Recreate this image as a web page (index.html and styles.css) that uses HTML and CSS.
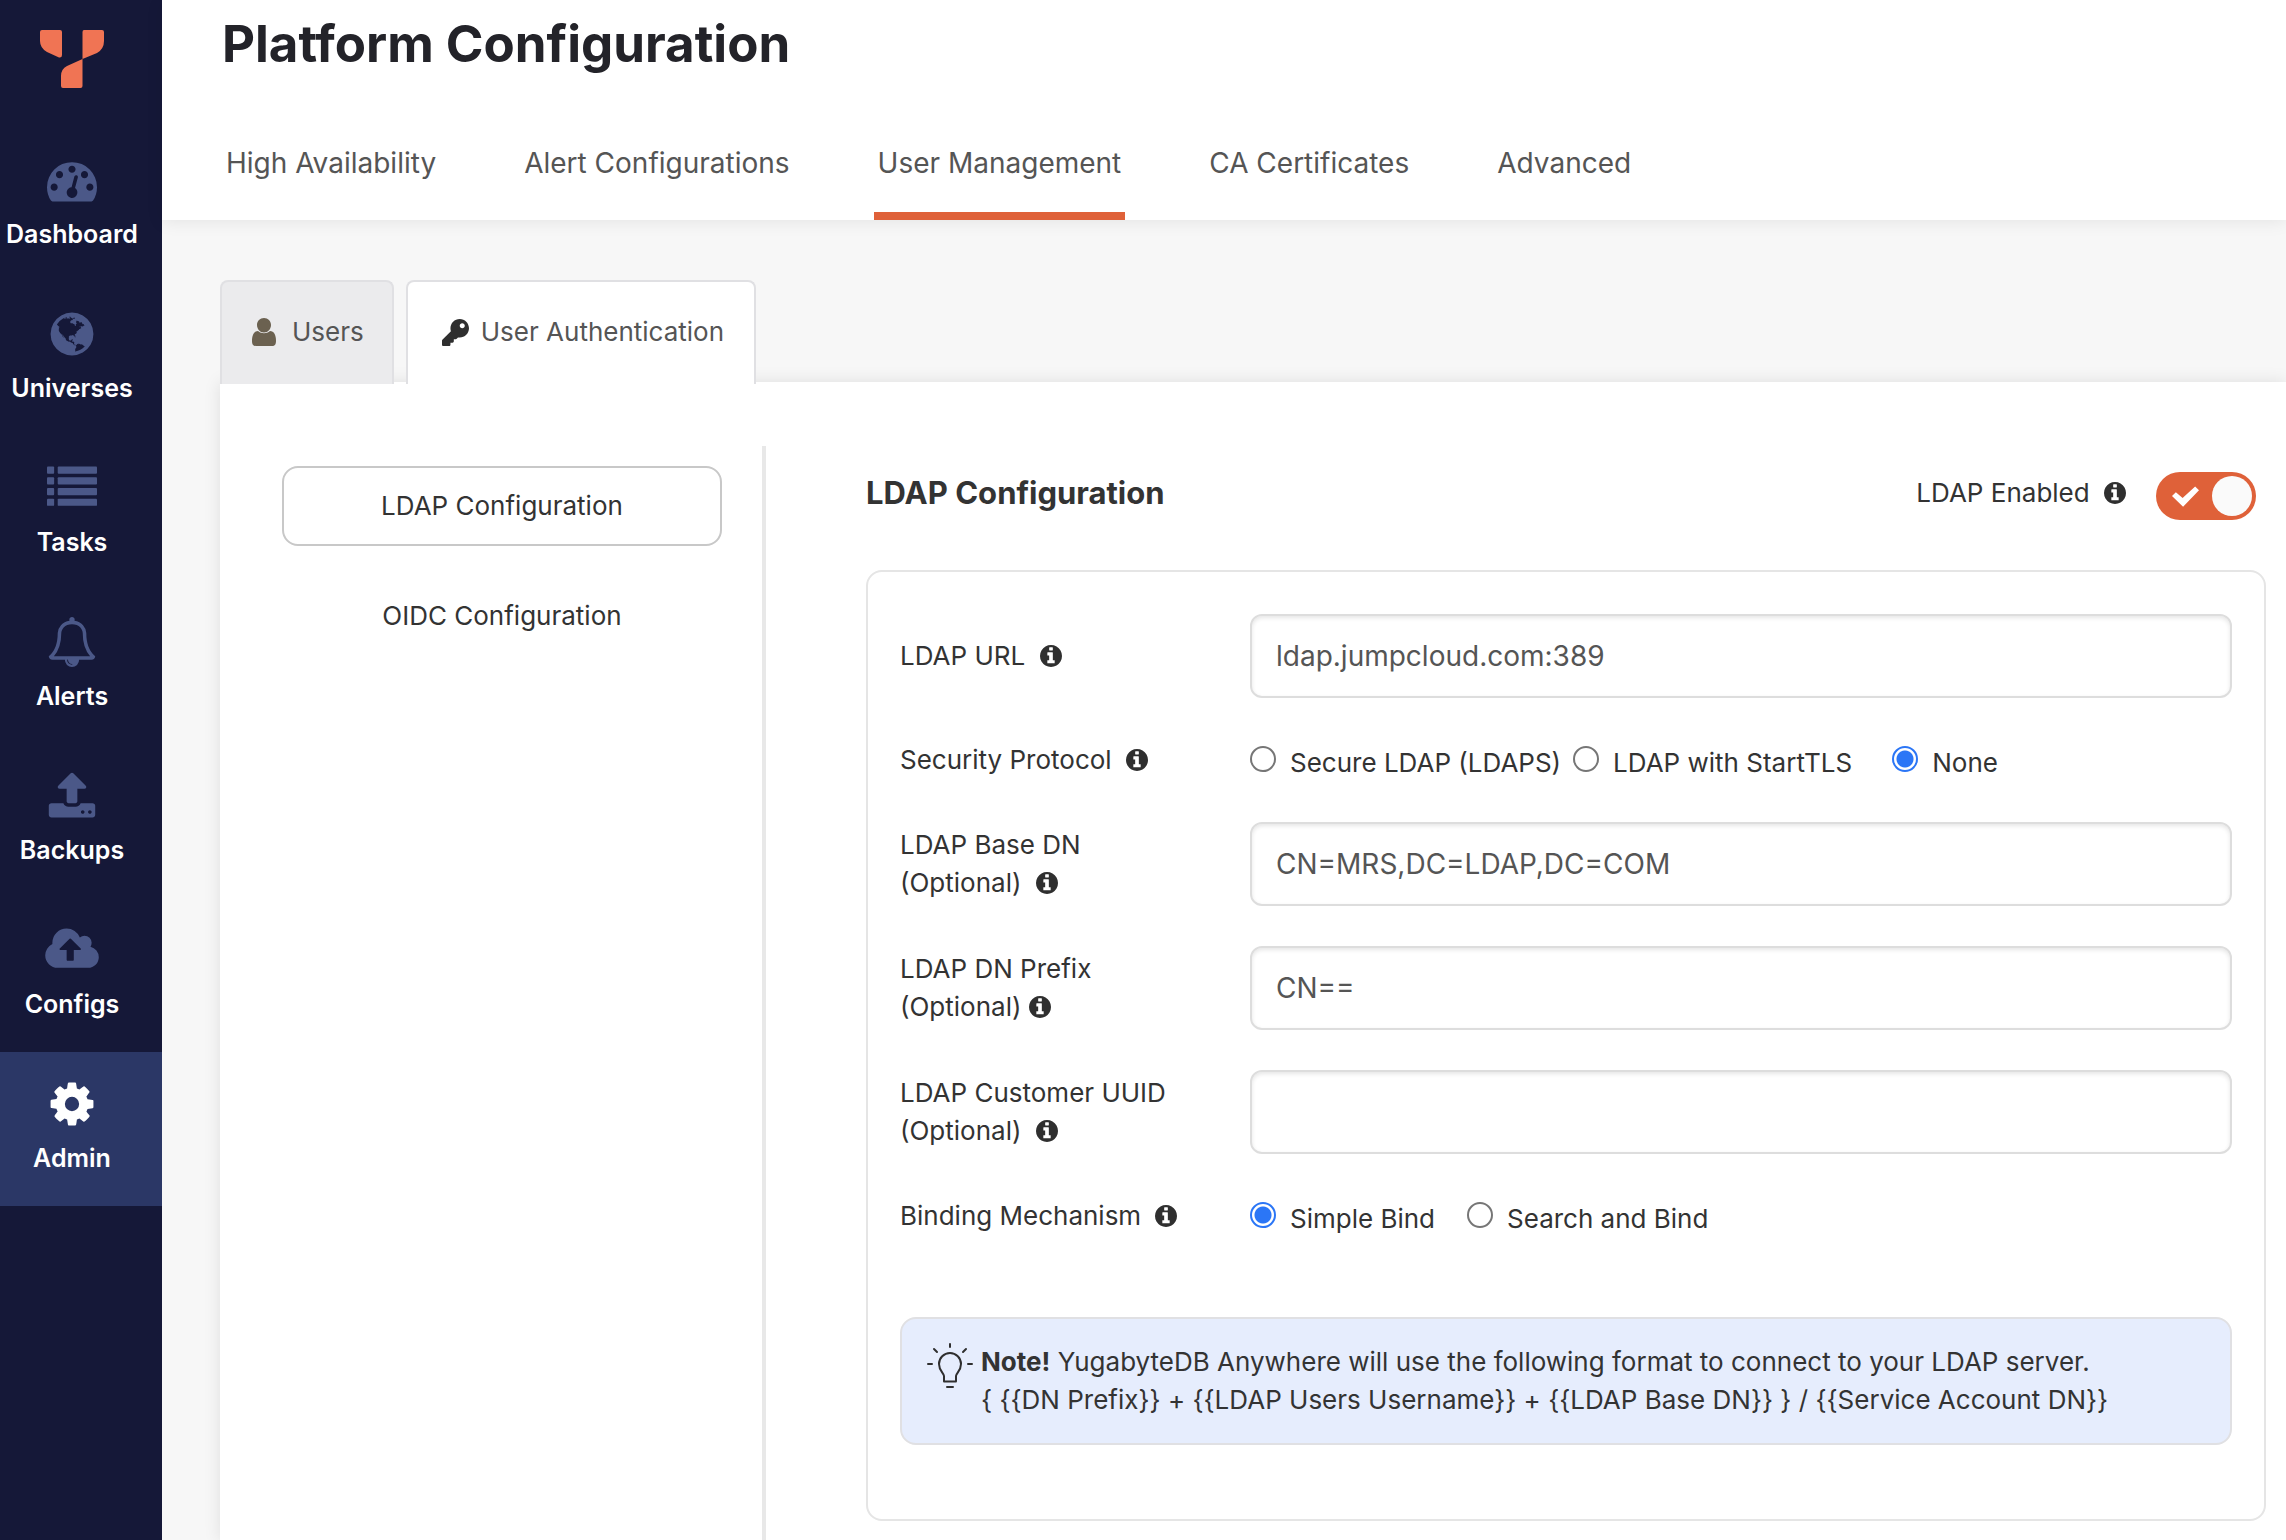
FILE: index.html
```html
<!DOCTYPE html>
<html lang="en">
<head>
<meta charset="utf-8">
<title>Platform Configuration</title>
<link rel="stylesheet" href="styles.css">
</head>
<body>
<svg class="sprite" aria-hidden="true">
  <symbol id="info" viewBox="128 128 1536 1536"><path d="M1152 1376v-160q0-14-9-23t-23-9h-96v-512q0-14-9-23t-23-9h-320q-14 0-23 9t-9 23v160q0 14 9 23t23 9h96v320h-96q-14 0-23 9t-9 23v160q0 14 9 23t23 9h448q14 0 23-9t9-23zm-128-896v-160q0-14-9-23t-23-9h-192q-14 0-23 9t-9 23v160q0 14 9 23t23 9h192q14 0 23-9t9-23zm640 416q0 209-103 385.5t-279.5 279.5-385.5 103-385.5-103-279.5-279.5-103-385.5 103-385.5 279.5-279.5 385.5-103 385.5 103 279.5 279.5 103 385.5z"/></symbol>
</svg>
<div class="app">
  <nav class="sidebar" aria-label="Main">
    <a class="logo" href="#" aria-label="YugabyteDB">
      <svg width="64" height="58" viewBox="0 0 64 58"><path d="M2 0h18q2 0 2 2v23q0 3-3 2.500L7 22Q0 18 0 11V2Q0 0 2 0zM44 0h18q2 0 2 2v9q0 8-7 12L42.500 29V56q0 2-2 2H23q-2 0-2-2V46q0-7 6-10l15.500-7V2q0-2 1.500-2z"/></svg>
    </a>
    <a class="side-item" href="#">
      <svg class="side-icon" viewBox="0 0 1792 1792"><path d="M384 1152q0-53-37.5-90.5t-90.5-37.5-90.5 37.5-37.5 90.5 37.5 90.5 90.5 37.5 90.5-37.5 37.5-90.5zm192-448q0-53-37.5-90.5t-90.5-37.5-90.5 37.5-37.5 90.5 37.5 90.5 90.5 37.5 90.5-37.5 37.5-90.5zm428 481l101-382q6-26-7.500-48.500t-38.500-29.500-48 6.500-30 39.500l-101 382q-60 5-107 43.500t-63 98.500q-20 77 20 146t117 89 146-20 89-117q16-60-6-117t-72-91zm660-33q0-53-37.500-90.500t-90.500-37.500-90.500 37.500-37.500 90.500 37.500 90.500 90.500 37.500 90.500-37.500 37.500-90.500zm-640-640q0-53-37.500-90.500t-90.500-37.500-90.500 37.500-37.500 90.500 37.500 90.500 90.500 37.500 90.500-37.500 37.500-90.500zm448 192q0-53-37.500-90.500t-90.500-37.500-90.500 37.500-37.500 90.500 37.500 90.500 90.500 37.500 90.500-37.500 37.500-90.500zm320 448q0 261-141 483-19 29-54 29h-1402q-35 0-54-29-141-221-141-483 0-182 71-348t191-286 286-191 348-71 348 71 286 191 191 286 71 348z"/></svg>
      Dashboard
    </a>
    <a class="side-item" href="#">
      <svg class="side-icon" viewBox="0 0 1792 1792"><path d="M896 128q209 0 385.5 103t279.5 279.5 103 385.5-103 385.5-279.5 279.5-385.5 103-385.5-103-279.5-279.5-103-385.5 103-385.5 279.5-279.5 385.5-103zm274 521q-2 1-9.5 9.5t-13.5 9.5q2 0 4.5-5t5-11 3.5-7q6-7 22-15 14-6 52-12 34-8 51 11-2-2 9.500-13t14.500-12q3-2 15-4.500t15-7.500l2-22q-12 1-17.500-7t-6.500-21q0 2-6 8 0-7-4.500-8t-11.500 1-9 1q-10-3-15-7.500t-8-16.500-4-15q-2-5-9.500-11t-9.500-10q-1-2-2.500-5.500t-3-6.500-4-5.500-5.500-2.500-7 5-7.500 10-4.500 5q-3-2-6-1.500t-4.500 1-4.500 3-5 3.500q-3 2-8.500 3t-8.500 2q15-5-1-11-10-4-16-3 9-4 7.500-12t-8.500-14h5q-1-4-8.500-8.500t-17.500-8.500-13-6q-8-5-34-9.500t-33-.5q-5 6-4.500 10.500t4 14 3.500 12.500q1 6-5.500 13t-6.500 12q0 7 14 15.500t10 21.500q-3 8-16 16t-16 12q-5 8-1.500 18.500t10.500 16.500q2 2 1.500 4t-3.500 4.500-5.500 4-6.500 3.500l-3 2q-11 5-20.500-6t-13.500-26q-7-25-16-30-23-8-29 1-5-13-41-26-25-9-58-4 6-1 0-15-7-15-19-12 3-6 4-17.500t1-13.500q3-13 12-23 1-1 7-8.500t9.500-13.500.5-6q35 4 50-11 5-5 11.500-17t10.500-17q9-6 14-5.500t14.500 5.500 14.500 5q14 1 15.500-11t-7.500-20q12 1 3-17-4-7-8-9-12-4-27 5-8 4 2 8-1-1-9.500 10.500t-16.500 17.500-16-5q-1-1-5.500-13.500t-9.500-13.500q-8 0-16 15 3-8-11-15t-24-8q19-12-8-27-7-4-20.500-5t-19.500 4q-5 7-5.500 11.500t5 8 10.500 5.500 11.500 4 8.500 3q14 10 8 14-2 1-8.500 3.500t-11.500 4.500-6 4q-3 4 0 14t-2 14q-5-5-9-17.500t-7-16.500q7 9-25 6l-10-1q-4 0-16 2t-20.500 1-13.500-8q-4-8 0-20 1-4 4-2-4-3-11-9.500t-10-8.500q-46 15-94 41 6 1 12-1 5-2 13-6.500t10-5.500q34-14 42-7l5-5q14 16 20 25-7-4-30-1-20 6-22 12 7 12 5 18-4-3-11.500-10t-14.500-11-15-5q-16 0-22 1-146 80-235 222 7 7 12 8 4 1 5 9t2.500 11 11.500-3q9 8 3 19 1-1 44 27 19 17 21 21 3 11-10 18-1-2-9-9t-9-4q-3 5 .5 18.500t10.500 12.500q-7 0-9.500 16t-2.500 35.500-1 23.500l2 1q-3 12 5.500 34.500t21.500 19.500q-13 3 20 43 6 8 8 9 3 2 12 7.500t15 10 10 10.500q4 5 10 22.500t14 23.500q-2 6 9.500 20t10.500 23q-1 0-2.500 1t-2.500 1q3 7 15.500 14t15.500 13q1 3 2 10t3 11 8 2q2-20-24-62-15-25-17-29-3-5-5.500-15.500t-4.500-14.500q2 0 6 1.500t8.500 3.500 7.500 4 2 3q-3 7 2 17.500t12 18.500 17 19 12 13q6 6 14 19.500t0 13.500q9 0 20 10.500t17 19.500q5 8 8 26t5 24q2 7 8.500 13.500t12.500 9.500l16 8 13 7q5 2 18.500 10.500t21.500 11.500q10 4 16 4t14.500-2.500 13.500-3.500q15-2 29 15t21 21q36 19 55 11-2 1 .5 7.500t8 15.500 9 14.500 5.500 8.500q5 6 18 15t18 15q6-4 7-9-3 8 7 20t18 10q14-3 14-32-31 15-49-18 0-1-2.500-5.500t-4-8.500-2.500-8.500 0-7.500 5-3q9 0 10-3.500t-2-12.500-4-13q-1-8-11-20t-12-15q-5 9-16 8t-16-9q0 1-1.500 5.500t-1.500 6.500q-13 0-15-1 1-3 2.500-17.500t3.500-22.500q1-4 5.500-12t7.500-14.500 4-12.500-4.500-9.500-17.500-2.500q-19 1-26 20-1 3-3 10.500t-5 11.500-9 7q-7 3-24 2t-24-5q-13-8-22.500-29t-9.500-37q0-10 2.500-26.500t3-25-5.500-24.500q3-2 9-9.500t10-10.500q2-1 4.500-1.500t4.500 0 4-1.500 3-6q-1-1-4-3-3-3-4-3 7 3 28.500-1.500t27.500 1.500q15 11 22-2 0-1-2.500-9.500t-.5-13.500q5 27 29 9 3 3 15.500 5t17.500 5q3 2 7 5.500t5.500 4.500 5-.5 8.500-6.500q10 14 12 24 11 40 19 44 7 3 11 2t4.500-9.500 0-14-1.500-12.500l-1-8v-18l-1-8q-15-3-18.500-12t1.500-18.500 15-18.500q1-1 8-3.500t15.500-6.500 12.500-8q21-19 15-35 7 0 11-9-1 0-5-3t-7.500-5-4.500-2q9-5 2-16 5-3 7.500-11t7.500-10q9 12 21 2 8-8 1-16 5-7 20.500-10.500t18.500-9.500q7 2 8-2t1-12 3-12q4-5 15-9t13-5l17-11q3-4 0-4 18 2 31-11 10-11-6-20 3-6-3-9.500t-15-5.500q3-1 11.500-.5t10.500-1.500q15-10-7-16-17-5-43 12zm-163 877q206-36 351-189-3-3-12.500-4.500t-12.500-3.500q-18-7-24-8 1-7-2.500-13t-8-9-12.500-8-11-7q-2-2-7-6t-7-5.500-7.500-4.500-8.500-2-10 1l-3 1q-3 1-5.500 2.500t-5.500 3-4 3 0 2.500q-21-17-36-22-5-1-11-5.500t-10.500-7-10-1.500-11.500 7q-5 5-6 15t-2 13q-7-5 0-17.500t2-18.500q-3-6-10.500-4.500t-12 4.500-11.500 8.500-9 6.500-8.500 5.500-8.500 7.500q-3 4-6 12t-5 11q-2-4-11.500-6.500t-9.500-5.500q2 10 4 35t5 38q7 31-12 48-27 25-29 40-4 22 12 26 0 7-8 20.500t-7 21.500q0 6 2 16z"/></svg>
      Universes
    </a>
    <a class="side-item" href="#">
      <svg class="side-icon" viewBox="0 0 1792 1792"><g><rect x="0" y="128" width="256" height="256" rx="32"/><rect x="384" y="128" width="1408" height="256" rx="32"/><rect x="0" y="512" width="256" height="256" rx="32"/><rect x="384" y="512" width="1408" height="256" rx="32"/><rect x="0" y="896" width="256" height="256" rx="32"/><rect x="384" y="896" width="1408" height="256" rx="32"/><rect x="0" y="1280" width="256" height="256" rx="32"/><rect x="384" y="1280" width="1408" height="256" rx="32"/></g></svg>
      Tasks
    </a>
    <a class="side-item" href="#">
      <svg class="side-icon" viewBox="0 0 1792 1792"><path d="M912 1696q0-16-16-16-59 0-101.5-42.5t-42.5-101.5q0-16-16-16t-16 16q0 73 51.5 124.5t124.5 51.5q16 0 16-16zm-666-288h1300q-266-300-266-832 0-51-24-105t-69-103-121.5-80.5-169.5-31.5-169.5 31.5-121.5 80.5-69 103-24 105q0 532-266 832zm1482 0q0 52-38 90t-90 38h-448q0 106-75 181t-181 75-181-75-75-181h-448q-52 0-90-38t-38-90q50-42 91-88t85-119.5 74.5-158.5 50-206 19.5-260q0-152 117-282.5t307-158.5q-8-19-8-39 0-40 28-68t68-28 68 28 28 68q0 20-8 39 190 28 307 158.5t117 282.5q0 139 19.5 260t50 206 74.5 158.5 85 119.5 91 88z"/></svg>
      Alerts
    </a>
    <a class="side-item" href="#">
      <svg class="side-icon" viewBox="0 0 1792 1792"><path d="M1344 1472q0-26-19-45t-45-19-45 19-19 45 19 45 45 19 45-19 19-45zm256 0q0-26-19-45t-45-19-45 19-19 45 19 45 45 19 45-19 19-45zm128-224v320q0 40-28 68t-68 28h-1472q-40 0-68-28t-28-68v-320q0-40 28-68t68-28h427q21 56 70.5 92t110.5 36h256q61 0 110.5-36t70.5-92h427q40 0 68 28t28 68zm-325-648q-17 40-59 40h-256v448q0 26-19 45t-45 19h-256q-26 0-45-19t-19-45v-448h-256q-42 0-59-40-17-39 14-69l448-448q18-19 45-19t45 19l448 448q31 30 14 69z"/></svg>
      Backups
    </a>
    <a class="side-item" href="#">
      <svg class="side-icon side-icon-wide" viewBox="-64 0 1920 1792"><path d="M1216 864q0-14-9-23l-352-352q-9-9-23-9t-23 9l-351 351q-10 12-10 24 0 14 9 23t23 9h224v352q0 13 9.5 22.5t22.5 9.5h192q13 0 22.5-9.5t9.5-22.5v-352h224q13 0 22.5-9.5t9.5-22.5zm640 288q0 159-112.500 271.500t-271.500 112.500h-1088q-185 0-316.500-131.500t-131.500-316.500q0-130 70-240t188-165q-2-30-2-43 0-212 150-362t362-150q156 0 285.500 87t188.500 231q71-62 166-62 106 0 181 75t75 181q0 76-41 138 130 31 213.500 135.500t83.500 238.500z"/></svg>
      Configs
    </a>
    <a class="side-item side-item-active" href="#" aria-current="page">
      <svg class="side-icon" viewBox="0 0 1792 1792"><path d="M1152 896q0-106-75-181t-181-75-181 75-75 181 75 181 181 75 181-75 75-181zm512-109v222q0 12-8 23t-20 13l-185 28q-19 54-39 91 35 50 107 138 10 12 10 25t-9 23q-27 37-99 108t-94 71q-12 0-26-9l-138-108q-44 23-91 38-16 136-29 186-7 28-36 28h-222q-14 0-24.5-8.5t-11.5-21.5l-28-184q-49-16-90-37l-141 107q-10 9-25 9-14 0-25-11-126-114-165-168-7-10-7-23 0-12 8-23 15-21 51-66.5t54-70.5q-27-50-41-99l-183-27q-13-2-21-12.5t-8-23.5v-222q0-12 8-23t19-13l186-28q14-46 39-92-40-57-107-138-10-12-10-24 0-10 9-23 26-36 98.5-107.5t94.5-71.5q13 0 26 10l138 107q44-23 91-38 16-136 29-186 7-28 36-28h222q14 0 24.5 8.5t11.5 21.5l28 184q49 16 90 37l142-107q9-9 24-9 13 0 25 10 129 119 165 170 7 8 7 22 0 12-8 23-15 21-51 66.5t-54 70.5q26 50 41 98l183 28q13 2 21 12.5t8 23.5z"/></svg>
      Admin
    </a>
  </nav>

  <div class="page">
    <header class="header">
      <h1 class="title">Platform Configuration</h1>
      <nav class="tabs" aria-label="Configuration">
        <a class="tab" href="#">High Availability</a>
        <a class="tab" href="#">Alert Configurations</a>
        <a class="tab tab-active" href="#" aria-current="page">User Management</a>
        <a class="tab" href="#">CA Certificates</a>
        <a class="tab" href="#">Advanced</a>
      </nav>
    </header>

    <main class="content">
      <div class="subtabs">
        <button class="subtab subtab-users" type="button">
          <svg class="user-icon" width="24" height="28" viewBox="0 0 24 28"><path d="M12 0c4 0 7 3 7 7s-3 7.500-7 7.500S5 11 5 7s3-7 7-7zM6 13c3.500 3 8.500 3 12 0 4 0 6 4 6 10 0 3-1 5-4 5H4c-3 0-4-2-4-5 0-6 2-10 6-10z"/></svg>
          Users
        </button>
        <button class="subtab subtab-active" type="button">
          <svg width="27" height="27" viewBox="0 0 512 512"><path d="M512 176.001C512 273.203 433.202 352 336 352c-11.220 0-22.190-1.062-32.827-3.069l-24.012 27.014A23.999 23.999 0 0 1 261.223 384H224v40c0 13.255-10.745 24-24 24h-40v40c0 13.255-10.745 24-24 24H24c-13.255 0-24-10.745-24-24v-78.059c0-6.365 2.529-12.470 7.029-16.971l161.802-161.802C163.108 213.814 160 195.271 160 176 160 78.798 238.797.001 335.999 0 433.488-.001 512 78.511 512 176.001zM336 128c0 26.510 21.490 48 48 48s48-21.490 48-48-21.490-48-48-48-48 21.490-48 48z"/></svg>
          User Authentication
        </button>
      </div>

      <div class="panel">
        <div class="providers">
          <button class="provider provider-active" type="button">LDAP Configuration</button>
          <button class="provider" type="button">OIDC Configuration</button>
        </div>

        <section class="config">
          <div class="config-head">
            <h2 class="config-title">LDAP Configuration</h2>
            <label class="enable">
              <span class="enable-text">LDAP Enabled <svg class="info gap-l"><use href="#info"/></svg></span>
              <input class="switch-input" type="checkbox" checked>
              <span class="switch">
                <svg width="27" height="21" viewBox="0 0 28 21"><path d="M0 10l4-4 7 6L24 0l4 4-16.500 17z"/></svg>
                <span class="thumb"></span>
              </span>
            </label>
          </div>

          <form class="form">
            <div class="row">
              <label class="label" for="url">LDAP URL <svg class="info gap-l"><use href="#info"/></svg></label>
              <input class="field" id="url" type="text" value="ldap.jumpcloud.com:389">
            </div>
            <div class="row row-radio" role="radiogroup" aria-labelledby="protocol">
              <span class="label" id="protocol">Security Protocol <svg class="info gap-l"><use href="#info"/></svg></span>
              <div class="radios">
                <label class="option"><input class="radio" type="radio" name="protocol"><span class="option-text">Secure LDAP (LDAPS)</span></label>
                <label class="option option-wider"><input class="radio" type="radio" name="protocol"><span class="option-text">LDAP with StartTLS</span></label>
                <label class="option"><input class="radio" type="radio" name="protocol" checked><span class="option-text">None</span></label>
              </div>
            </div>
            <div class="row">
              <label class="label" for="base">LDAP Base DN<br>(Optional) <svg class="info gap-l"><use href="#info"/></svg></label>
              <input class="field" id="base" type="text" value="CN=MRS,DC=LDAP,DC=COM">
            </div>
            <div class="row">
              <label class="label" for="prefix">LDAP DN Prefix<br>(Optional) <svg class="info"><use href="#info"/></svg></label>
              <input class="field" id="prefix" type="text" value="CN==">
            </div>
            <div class="row">
              <label class="label" for="uuid">LDAP Customer UUID<br>(Optional) <svg class="info gap-l"><use href="#info"/></svg></label>
              <input class="field" id="uuid" type="text">
            </div>
            <div class="row row-radio" role="radiogroup" aria-labelledby="binding">
              <span class="label" id="binding">Binding Mechanism <svg class="info gap-l"><use href="#info"/></svg></span>
              <div class="radios">
                <label class="option option-wide"><input class="radio" type="radio" name="binding" checked><span class="option-text">Simple Bind</span></label>
                <label class="option"><input class="radio" type="radio" name="binding"><span class="option-text">Search and Bind</span></label>
              </div>
            </div>
            <div class="note">
              <svg class="bulb" width="46" height="46" viewBox="0 0 46 46"><path d="M23 1v3M7 6l3 3M39 6l-3 3M1 21h4M41 21h4M20 44h6M17 38.500h12M17 38v-5c0-3-5-5-5-12a11 11 0 0 1 22 0c0 7-5 9-5 12v5"/></svg>
              <p class="note-text"><strong>Note!</strong> YugabyteDB Anywhere will use the following format to connect to your LDAP server.<br>{ {{DN Prefix}} + {{LDAP Users Username}} + {{LDAP Base DN}} } / {{Service Account DN}}</p>
            </div>
          </form>
        </section>
      </div>
    </main>
  </div>
</div>
</body>
</html>
```
FILE: styles.css
```css
* { box-sizing: border-box; }

body {
  margin: 0;
  background: #f7f7f7;
  color: #333;
  font-family: Inter, "Liberation Sans", sans-serif;
  font-size: 26px;
  line-height: 38px;
}

button, input { font: inherit; color: inherit; }
button { cursor: pointer; }
a { color: inherit; text-decoration: none; }
.sprite { display: none; }

.app { display: flex; min-height: 100vh; }

/* Sidebar */
.sidebar { flex: none; width: 162px; background: #151838; color: #fff; }
.logo { display: flex; height: 128px; padding: 30px 0 0 40px; fill: #f07454; }
.side-item {
  display: flex;
  flex-direction: column;
  align-items: center;
  gap: 10px;
  height: 154px;
  padding: 27px 18px 0 0;
  font-size: 25px;
  font-weight: 600;
  line-height: 38px;
}
.side-icon { width: 50px; height: 50px; fill: #4b5888; }
.side-icon-wide { width: 54px; }
.side-item-active { background: #2b3766; }
.side-item-active .side-icon { fill: #fff; }

.page { flex: 1; min-width: 0; display: flex; flex-direction: column; }

/* Header */
.header {
  height: 220px;
  padding: 12px 60px 0;
  background: #fff;
  box-shadow: 0 2px 16px rgba(0, 0, 0, .08);
}
.title { margin: 0; color: #232329; font-size: 51px; font-weight: 700; line-height: 64px; }
.tabs { display: flex; gap: 80px; margin-top: 50px; }
.tab { height: 94px; padding: 18px 4px 0; color: #555; font-size: 28px; }
.tab-active { border-bottom: 8px solid #df6139; }

/* Content */
.content { flex: 1; display: flex; flex-direction: column; padding: 60px 0 0 58px; }
.subtabs { display: flex; gap: 12px; }
.subtab {
  position: relative;
  display: flex;
  align-items: center;
  gap: 12px;
  height: 104px;
  padding: 0 30px 2px 34px;
  border: 2px solid #e0e0e3;
  border-bottom: 0;
  border-radius: 8px 8px 0 0;
  background: #ebebed;
  color: #555;
  fill: #2f2f2f;
}
.subtab-users { gap: 16px; padding: 0 28px 2px 30px; }
.user-icon { fill: #6b6150; }
.subtab svg { flex: none; }
.subtab-active { z-index: 1; background: #fff; }

.panel {
  flex: 1;
  display: flex;
  margin-top: -2px;
  padding: 64px 20px 19px 62px;
  background: #fff;
  box-shadow: 0 0 16px rgba(0, 0, 0, .1);
}
.providers {
  flex: none;
  display: flex;
  flex-direction: column;
  gap: 30px;
  width: 484px;
  margin-bottom: -19px;
  padding: 20px 40px 0 0;
  border-right: 4px solid #e8e8e8;
}
.provider {
  height: 80px;
  padding: 0;
  border: 2px solid transparent;
  border-radius: 16px;
  background: none;
}
.provider-active { border-color: #c8c8c8; }

.config { flex: 1; min-width: 0; margin-left: 100px; }
.config-head {
  display: flex;
  justify-content: space-between;
  align-items: flex-start;
  height: 124px;
  padding: 26px 10px 0 0;
}
.config-title { margin: 0; font-size: 31px; font-weight: 700; line-height: 42px; }
.enable { display: flex; gap: 30px; }
.enable-text { line-height: 42px; }
.info { width: 22px; height: 22px; vertical-align: -2px; fill: #2f2f2f; }
.gap-l { margin-left: 7px; }

.switch-input { position: absolute; opacity: 0; }
.switch {
  display: flex;
  align-items: center;
  justify-content: space-between;
  width: 100px;
  height: 48px;
  padding: 0 4px 0 16px;
  border-radius: 24px;
  background: #df6139;
  fill: #fff;
}
.thumb { width: 40px; height: 40px; border-radius: 50%; background: #fafafa; }

/* Form */
.form { padding: 42px 32px 74px; border: 2px solid #e5e5e5; border-radius: 16px; }
.row { display: flex; align-items: center; height: 84px; margin-bottom: 40px; }
.row-radio { height: 44px; }
.label { flex: none; width: 350px; }
.field {
  flex: 1;
  min-width: 0;
  height: 84px;
  padding: 0 24px;
  border: 2px solid #ddd;
  border-radius: 12px;
  background: #fff;
  box-shadow: inset 0 2px 4px rgba(0, 0, 0, .1);
  color: #555;
  font-size: 28px;
}
.radios { display: flex; gap: 12px; }
.option { display: flex; gap: 14px; align-items: center; }
.option-wide { margin-right: 20px; }
.option-wider { margin-right: 28px; }
.option-text { padding-top: 6px; }
.radio {
  appearance: none;
  flex: none;
  width: 26px;
  height: 26px;
  margin: 0 0 2px;
  border: 2px solid #767676;
  border-radius: 50%;
  background: #fff;
}
.radio:checked {
  border-color: #2b76f6;
  background: radial-gradient(circle, #2b76f6 8px, #fff 9px);
}

.note {
  display: flex;
  gap: 8px;
  margin-top: 79px;
  padding: 24px 24px 24px 25px;
  border: 2px solid #e0e0e3;
  border-radius: 16px;
  background: #e6edfd;
}
.bulb { flex: none; fill: none; stroke: #2f2f2f; stroke-width: 2; stroke-linecap: round; stroke-linejoin: round; }
.note-text { margin: 0; font-feature-settings: "calt" 0; }
```
